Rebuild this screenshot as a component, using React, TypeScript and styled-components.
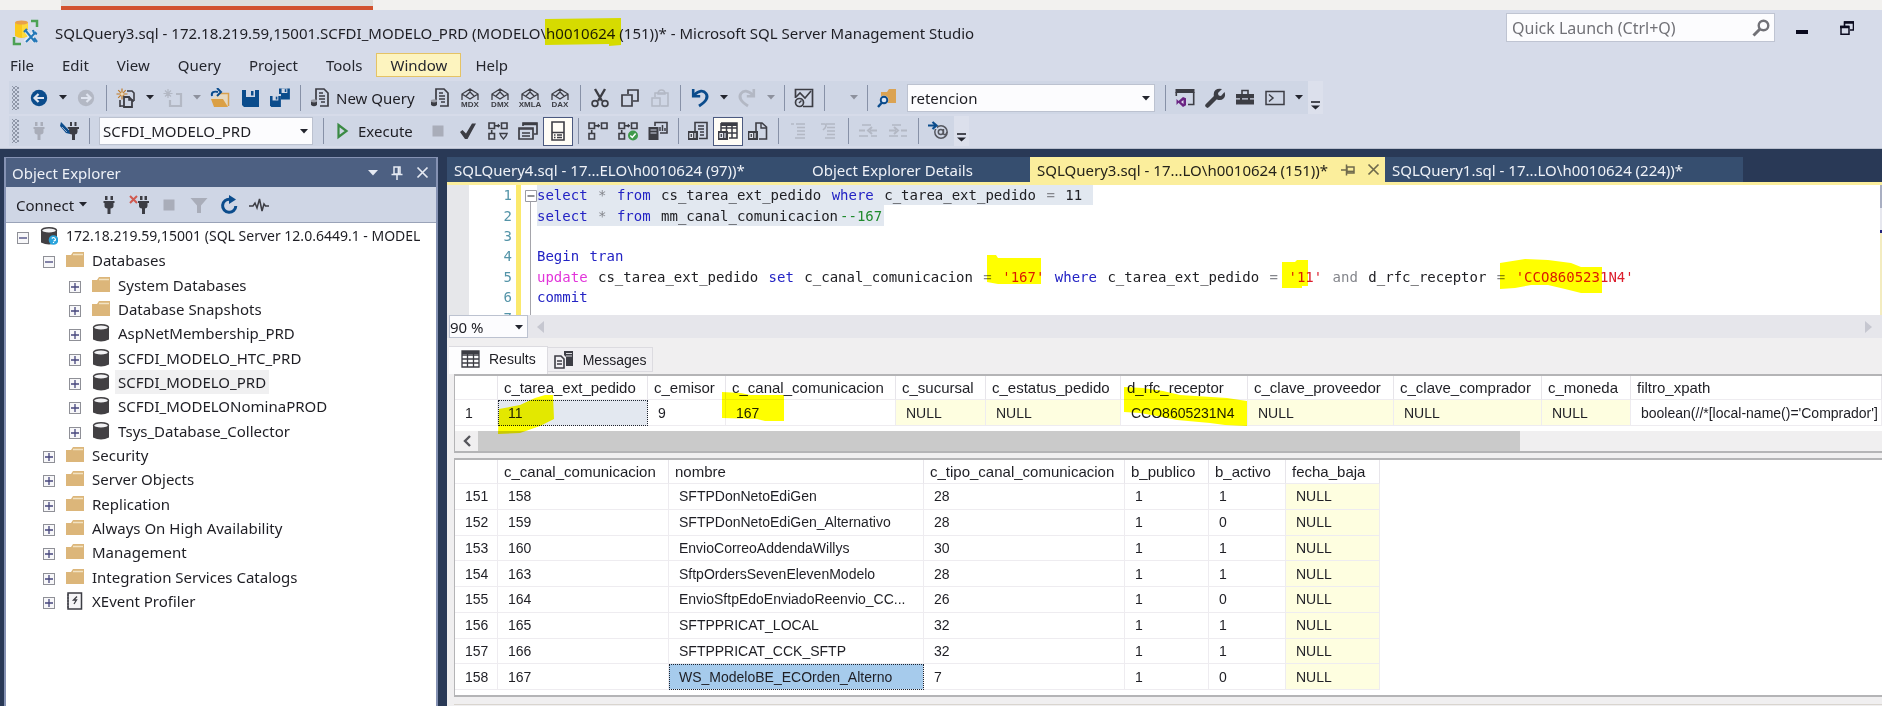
import React from 'react';
import styled, { createGlobalStyle, css } from 'styled-components';

const UI = '"Noto Sans", "Open Sans", sans-serif';
const GRID = '"Liberation Sans", Arial, sans-serif';
const MONO = '"DejaVu Sans Mono", "Liberation Mono", monospace';
const INK = '#3c3d44';
const BLUE = '#0b4c8c';
const DIM = '#b3b8c4';

const Global = createGlobalStyle`
  * { box-sizing: border-box; }
  body { margin: 0; background: #293956; font: 15px/20px ${UI}; color: #1e1e24; }
  button, input, select { font: inherit; color: inherit; margin: 0; padding: 0; border: 0; background: none; border-radius: 0; }
  svg { display: block; flex: none; }
`;

/* ---------- frame ---------- */

const App$ = styled.div`
  display: flex;
  flex-direction: column;
  min-height: 100vh;
  overflow: hidden;
`;

const BrowserStrip = styled.div`
  height: 10px;
  padding-left: 61px;
  background: #f2f1ef;
`;

const BrowserTab = styled.div`
  width: 312px;
  height: 10px;
  background: #dededb;
  border-bottom: 4px solid #d2532e;
`;

const Header = styled.header`
  background: #d6dbe9;
  border-bottom: 1px solid #b9bfce;
`;

const TitleBar = styled.div`
  display: flex;
  align-items: flex-start;
  height: 43px;
  padding: 3px 28px 0 12px;
`;

const Title = styled.h1`
  flex: 1;
  margin: 10px 0 0 16px;
  font-size: 15px;
  line-height: 20px;
  font-weight: 400;
  white-space: nowrap;
`;

const LogoSlot = styled.div`
  margin-top: 6px;
`;

const QuickLaunch = styled.label`
  display: flex;
  align-items: center;
  width: 269px;
  height: 29px;
  padding: 0 4px 0 5px;
  background: #fcfcfe;
  border: 1px solid #bfc4d2;
  input { flex: 1; min-width: 0; font-size: 16px; outline: 0; }
  input::placeholder { color: #717177; opacity: 1; }
`;

const WindowButton = styled.button`
  display: flex;
  justify-content: flex-end;
  height: 29px;
  align-items: center;
  width: 33px;
  & + & { width: 46px; }
`;

const MenuBar = styled.nav`
  display: flex;
  height: 24px;
  margin: 0 0 4px -4px;
`;

const MenuItem = styled.button<{ $active?: boolean }>`
  padding: 0 13px;
  border: 1px solid transparent;
  color: #24262e;
  ${p => p.$active && css`background: #fdf4bf; border-color: #e5c365;`}
`;

/* ---------- toolbars ---------- */

const BarRow = styled.div<{ $tall?: boolean }>`
  display: flex;
  height: ${p => (p.$tall ? 33 : 30)}px;
  margin: 0 0 2px 9px;
`;

const Bar = styled.div`
  display: flex;
  align-items: center;
  padding: 0 1px 0 3px;
  background: #cfd6e5;
`;

const Grip = styled.i`
  width: 7px;
  height: 24px;
  margin-right: 5px;
  background-image: radial-gradient(circle, #8f97a8 1px, transparent 1px), radial-gradient(circle, #8f97a8 1px, transparent 1px);
  background-size: 4px 4px;
  background-position: 0 0, 2px 2px;
`;

const ToolButton = styled.button<{ $on?: boolean }>`
  display: flex;
  align-items: center;
  justify-content: center;
  width: 30px;
  height: 29px;
  ${p => p.$on && css`background: #fffdf6; border: 1px solid #4c5a80;`}
`;

const DropButton = styled.button<{ $wide?: boolean }>`
  display: flex;
  align-items: center;
  justify-content: flex-end;
  width: ${p => (p.$wide ? 33 : 17)}px;
  height: 29px;
  padding-right: 4px;
`;

const TextButton = styled.button<{ $gap?: number }>`
  display: flex;
  align-items: center;
  height: 29px;
  padding: 0 10px 0 5px;
  gap: ${p => p.$gap ?? 6}px;
  white-space: nowrap;
`;

const Separator = styled.i`
  width: 1px;
  height: 26px;
  margin: 0 4px 0 5px;
  background: #8791a7;
`;

const Overflow = styled.button`
  display: flex;
  align-items: flex-end;
  justify-content: center;
  width: 15px;
  padding-bottom: 4px;
  background: #dce0ec;
`;

const ComboBox = styled.span<{ $w: number }>`
  position: relative;
  display: flex;
  width: ${p => p.$w}px;
  height: 28px;
  margin: 0 5px;
  background: #fcfcfe;
  border: 1px solid #bcc2d0;
  select { flex: 1; appearance: none; padding-left: 3px; outline: 0; }
  svg { position: absolute; right: 4px; top: 50%; margin-top: -2px; pointer-events: none; }
`;

/* ---------- object explorer ---------- */

const Workspace = styled.div`
  flex: 1;
  display: flex;
  gap: 9px;
  padding: 8px 0 0 4px;
`;

const Explorer = styled.aside`
  flex: 0 0 434px;
  display: flex;
  flex-direction: column;
  min-width: 0;
  border: 2px solid #8592b3;
  border-top-width: 1px;
  border-bottom: 0;
  background: #fff;
`;

const ExplorerHead = styled.div`
  display: flex;
  align-items: center;
  height: 29px;
  padding: 0 7px 0 6px;
  gap: 12px;
  background: #4d6082;
  color: #eef1f7;
  h2 { flex: 1; margin: 0; font-size: 15px; font-weight: 400; }
`;

const ExplorerTools = styled.div`
  display: flex;
  align-items: center;
  height: 36px;
  background: #cfd6e5;
  border-bottom: 1px solid #9aa3b8;
`;

const ConnectButton = styled(TextButton)`
  width: 88px;
  padding: 0 0 0 10px;
  gap: 5px;
`;

const Tree = styled.ul`
  display: grid;
  grid-auto-rows: 1fr;
  height: 389px;
  margin: 1px 0 0;
  padding: 0;
  list-style: none;
  overflow: hidden;
`;

const TreeRow = styled.li<{ $level: number }>`
  display: flex;
  align-items: center;
  padding-left: ${p => 11 + p.$level * 26}px;
  font-size: ${p => (p.$level === 0 ? 14 : 15)}px;
  white-space: nowrap;
`;

const Expander = styled.button`
  flex: none;
  width: 12px;
  height: 12px;
  margin: 4px 11px 0 0;
  border: 1px solid #8f9097;
  background: #f7f7f9;
  display: grid;
  place-items: center;
`;

const NodeIcon = styled.span`
  flex: none;
  width: 18px;
  margin-right: 5px;
`;

const NodeLabel = styled.span<{ $selected?: boolean }>`
  padding: 2px 3px;
  ${p => p.$selected && css`background: #f0f0f1;`}
`;

/* ---------- documents ---------- */

const Documents = styled.main`
  flex: 1;
  min-width: 0;
  display: flex;
  flex-direction: column;
`;

const TabStrip = styled.div`
  display: flex;
  height: 28px;
  border-bottom: 3px solid #fbee9c;
`;

const DocTab = styled.div<{ $w: number; $active?: boolean }>`
  display: flex;
  align-items: center;
  width: ${p => p.$w}px;
  padding-left: 7px;
  white-space: nowrap;
  color: ${p => (p.$active ? '#25231a' : '#eef1f7')};
  background: ${p => (p.$active ? '#fbee9c' : '#364e6f')};
  button:first-of-type { margin-left: 13px; }
  button + button { margin-left: 12px; }
`;

const Editor = styled.div`
  display: flex;
  height: 130px;
  overflow: hidden;
  background: #fff;
  font-family: ${MONO};
  font-size: 14px;
`;

const BreakMargin = styled.div`
  width: 22px;
  background: #e6e7ea;
`;

const LineColumn = styled.div`
  display: grid;
  grid-auto-rows: 1fr;
  height: 143px;
  align-items: center;
`;

const LineNumbers = styled(LineColumn)`
  width: 52px;
  padding-right: 4px;
  text-align: right;
  color: #5494a8;
  border-right: 5px solid #fbe96c;
`;

const Folding = styled.div`
  width: 16px;
  padding: 5px 0 0 4px;
`;

const CodeLines = styled(LineColumn)`
  flex: 1;
  white-space: pre;
`;

const CodeLine = styled.code<{ $selected?: 'line' | 'text' }>`
  justify-self: start;
  align-self: stretch;
  display: flex;
  align-items: center;
  font: inherit;
  ${p => p.$selected && css`background: #e2e8f0;`}
  ${p => p.$selected === 'line' && css`padding-right: 9px;`}
`;

const tokenColors = { k: '#2323c4', f: '#e234da', s: '#dc1c2c', o: '#84868c', c: '#1f8a2c', n: '#202024' };

const Token = styled.span<{ $kind: keyof typeof tokenColors }>`
  position: relative;
  margin-right: 2px;
  color: ${p => tokenColors[p.$kind]};
`;

const EditorScroll = styled.div`
  width: 2px;
  background: linear-gradient(#a9afc2 0 23px, #e6e7ee 23px 45px, #24247c 45px 48px, #f3ecc0 48px);
`;

const ZoomRow = styled.div`
  display: flex;
  align-items: center;
  height: 23px;
  padding: 0 9px 0 2px;
  background: #e6e6eb;
  justify-content: space-between;
  ${ComboBox} { width: 79px; height: 23px; margin: 0 9px 0 0; }
  select { padding-left: 0; line-height: 20px; }
`;

const ZoomLeft = styled.div`
  display: flex;
  align-items: center;
`;

const Results = styled.section`
  flex: 1;
  padding: 7px 0 0 2px;
  background: #f0eff0;
  font-family: ${GRID};
  font-size: 14px;
`;

const ResultTabs = styled.div`
  display: flex;
  align-items: flex-end;
  height: 29px;
`;

const ResultTab = styled.button<{ $active?: boolean }>`
  display: flex;
  align-items: center;
  height: ${p => (p.$active ? 28 : 25)}px;
  padding: ${p => (p.$active ? '0 11px 4px 12px' : '0 5px 0 6px')};
  margin-bottom: ${p => (p.$active ? 0 : 2)}px;
  gap: 9px;
  border: 1px solid #dcdbe0;
  border-left-width: 0;
  border-bottom-width: ${p => (p.$active ? 0 : 1)}px;
  background: ${p => (p.$active ? '#fdfdfe' : '#f0eff2')};
`;

const Pane = styled.div`
  margin-left: 5px;
  background: #fff;
  border: solid #b4b4b6;
  border-width: 2px 0 2px 1px;
  overflow: hidden;
  & + & { margin-top: 5px; }
`;

const Sheet = styled.table<{ $h: number; $fill?: boolean }>`
  table-layout: fixed;
  border-collapse: separate;
  border-spacing: 0;
  width: ${p => (p.$fill ? '100%' : '925px')};
  height: ${p => p.$h}px;
`;

const Col = styled.col<{ $w?: number }>`
  width: ${p => (p.$w ? p.$w + 'px' : 'auto')};
`;

const Head = styled.th`
  height: 24px;
  padding: 0 0 0 6px;
  font-size: 15px;
  line-height: 20px;
  font-weight: 400;
  text-align: left;
  white-space: nowrap;
  border-right: 1px solid #e7e5ea;
  border-bottom: 1px solid #eeecf0;
`;

const Cell = styled.td<{ $state?: 'null' | 'focus' | 'selected' }>`
  position: relative;
  padding: 0 0 0 10px;
  line-height: 20px;
  white-space: nowrap;
  border-right: 1px solid #eeecf0;
  border-bottom: 1px solid #eeecf0;
  ${p => p.$state === 'null' && css`background: #fefee0;`}
  ${p => p.$state === 'focus' && css`background: #e3e8f0;`}
  ${p => p.$state === 'selected' && css`background: #a6cbec;`}
  ${p => (p.$state === 'focus' || p.$state === 'selected') && css`outline: 1px dotted #1c2430; outline-offset: -1px;`}
`;

const HScroll = styled.div`
  display: flex;
  height: 20px;
  margin-top: 5px;
  background: #f0eff0;
`;

const HScrollButton = styled.button`
  display: grid;
  place-items: center;
  width: 23px;
`;

const HScrollThumb = styled.div`
  width: 73%;
  background: #cacaca;
`;

const PaneFoot = styled.div`
  height: 5px;
`;

const BottomLine = styled.div`
  margin: 7px 0 0 5px;
  height: 1px;
  background: #d9d5cf;
`;

/* ---------- marker pen ---------- */

const Anchor = styled.span`
  position: relative;
`;

const Ink = styled.svg<{ $x: number; $y: number }>`
  position: absolute;
  left: ${p => p.$x}px;
  top: ${p => p.$y}px;
  z-index: 2;
  mix-blend-mode: multiply;
  pointer-events: none;
`;

const Marker = ({ x, y, w, h, points }: { x: number; y: number; w: number; h: number; points: string }) => (
  <Ink $x={x} $y={y} width={w} height={h} aria-hidden>
    <polygon points={points} fill="#ffff00" />
  </Ink>
);

/* ---------- icons ---------- */

const Svg = ({ w = 20, h = 20, children }: { w?: number; h?: number; children: React.ReactNode }) => (
  <svg width={w} height={h} viewBox={`0 0 ${w} ${h}`} fill="none" aria-hidden>{children}</svg>
);

const Caret = ({ c = '#23252e' }: { c?: string }) => <Svg w={8} h={5}><path d="M0 0h8L4 4.600z" fill={c} /></Svg>;

const Logo = () => (
  <Svg w={27} h={27}>
    <path d="M3 4q6-3 13 0v13q-7 4-13 0z" fill="#fbc91a" />
    <path d="M10 3q4 0 6 1v13q-3 2-6 1z" fill="#fdda3c" />
    <ellipse cx="9.500" cy="3.500" rx="6.500" ry="2" fill="#e8a04a" />
    <path d="M19 2h6v6M2 18v7h7" stroke="#4da254" strokeWidth="2.500" />
    <path d="M14 12l9 11M24 12l-11 11" stroke="#e6ecf4" strokeWidth="4" />
    <path d="M14 12l9 11M24 13l-10 10" stroke="#2478b8" strokeWidth="2" />
    <path d="M21 11l1 3 3 1M12 13l3-3M22 19l3 4" stroke="#2478b8" strokeWidth="2.200" />
  </Svg>
);

const Nav = ({ c, flip }: { c: string; flip?: boolean }) => (
  <Svg>
    <circle cx="10" cy="10" r="8.200" fill={c} />
    <path d={flip ? 'M5 10h9M10.500 6l4 4-4 4' : 'M15 10H6M9.500 6l-4 4 4 4'} stroke="#dfe4ef" strokeWidth="2.200" />
  </Svg>
);

const NewProject = () => (
  <Svg>
    <path d="M6 .500v11M.500 6h11M2.200 2.200l7.600 7.600M9.800 2.200L2.200 9.800" stroke="#c07a26" strokeWidth="1.200" />
    <circle cx="6" cy="6" r="1.700" fill="#e9d9c0" />
    <path d="M11 3h5l2 2v8M4 12v7" stroke={INK} strokeWidth="1.600" />
    <path d="M8 9h5l3 3v7H8z" stroke={INK} strokeWidth="1.800" />
    <path d="M13 8v4h4M4 18h4M16 13h2" stroke={INK} strokeWidth="1.500" />
  </Svg>
);

const AddItem = () => (
  <Svg>
    <path d="M5 1v9M.500 5.500h9M2 2.500l6 6M8 2.500l-6 6" stroke={DIM} strokeWidth="1.200" />
    <path d="M13 6h5v12H7v-6" stroke={DIM} strokeWidth="2.200" />
  </Svg>
);

const OpenFile = () => (
  <Svg>
    <path d="M9 5h10v13H4l-3-8h3v-2" fill="#e6d9c0" />
    <path d="M10 5.500h8.500V18" stroke="#d9a14c" strokeWidth="1.500" />
    <path d="M1 11h12l5 8H4z" fill="#dba045" />
    <path d="M2 8C1 4 4 3 8 4" stroke={BLUE} strokeWidth="2" />
    <path d="M7 0l4 4-4 4" stroke={BLUE} strokeWidth="2" />
  </Svg>
);

const Disk = ({ s = 1, x = 0, y = 0 }: { s?: number; x?: number; y?: number }) => (
  <g transform={`translate(${x} ${y}) scale(${s})`}>
    <path d="M0 0h17v17H2l-2-2z" fill={BLUE} />
    <path d="M4 0h9v7H4z" fill="#cfd6e5" />
    <path d="M9 1h2.500v4.500H9z" fill={BLUE} />
  </g>
);

const Save = () => <Svg><Disk x={2} y={2} /></Svg>;
const SaveAll = () => <Svg><Disk s={0.64} x={9} y={0.5} /><path d="M-1 6h12v14H-1z" fill="#cfd6e5" /><Disk s={0.64} x={0} y={8} /><path d="M11 10h3" stroke={BLUE} strokeWidth="2" /></Svg>;

const QueryDoc = () => (
  <Svg>
    <path d="M6 12V1h8l4 4v13h-8" stroke={INK} strokeWidth="1.700" />
    <path d="M9 5h4M9 8h6M9 11h6M11 14h4" stroke={INK} strokeWidth="1.600" />
    <path d="M1 13v4q3 2.500 6 0v-4z" fill={INK} />
    <ellipse cx="4" cy="12.800" rx="3.200" ry="1.600" fill="#9a9ca6" />
  </Svg>
);

const IconCaption = styled.text`
  font: 700 8px ${GRID};
  fill: ${INK};
`;

const Cube = ({ label }: { label: string }) => (
  <Svg w={22} h={22}>
    <path d="M3 13V7l8-5 8 5v6M3 7l8 5 8-5M11 2v3M7 9l4-4 4 4" stroke={INK} strokeWidth="1.300" />
    <path d="M1 13.500h20v8H1z" fill="#cfd6e5" />
    <IconCaption x="11" y="20" textAnchor="middle">{label}</IconCaption>
  </Svg>
);

const Cut = () => (
  <Svg>
    <path d="M5 1l7 12M15 1L8 13" stroke={INK} strokeWidth="2.400" />
    <circle cx="5" cy="15.500" r="2.900" stroke={INK} strokeWidth="1.700" />
    <circle cx="15" cy="15.500" r="2.900" stroke={INK} strokeWidth="1.700" />
  </Svg>
);

const Copy = () => <Svg><path d="M8 6V2h10v11h-5M2 7h10v11H2z" stroke={INK} strokeWidth="1.700" /></Svg>;

const Paste = () => (
  <Svg>
    <path d="M5 9V5h13v13h-7" stroke={DIM} strokeWidth="1.500" />
    <path d="M8 6q0-4 3.500-4T15 6z" stroke={DIM} strokeWidth="1.500" />
    <path d="M2 10h8v8H2z" stroke={DIM} strokeWidth="1.500" />
  </Svg>
);

const Undo = ({ c, flip }: { c: string; flip?: boolean }) => (
  <Svg>
    <g transform={flip ? 'matrix(-1 0 0 1 20 0)' : undefined}>
      <path d="M4 7Q12 0 16 5.500T9 18" stroke={c} strokeWidth="2.900" />
      <path d="M3.200 1v7.200h7" stroke={c} strokeWidth="2.600" />
    </g>
  </Svg>
);

const Activity = () => (
  <Svg>
    <path d="M1.500 10V1.500h17v17H9" stroke={INK} strokeWidth="1.700" />
    <path d="M2 9l4-4 5 5 6-7" stroke={INK} strokeWidth="1.600" />
    <circle cx="5.500" cy="14.500" r="4" stroke={INK} strokeWidth="1.700" />
    <path d="M5 15l2.500-2.500" stroke={INK} strokeWidth="1.400" />
  </Svg>
);

const FindFolder = () => (
  <Svg>
    <path d="M4 4h6l2-3h7v14H9l-5-3z" fill="#dba353" />
    <circle cx="7" cy="12" r="4.500" fill="#cfd6e5" />
    <circle cx="7" cy="12" r="3.300" stroke={BLUE} strokeWidth="1.900" fill="#dbe3f2" />
    <path d="M5 14.500L1 19" stroke={BLUE} strokeWidth="2.400" />
  </Svg>
);

const StudioWindow = () => (
  <Svg>
    <path d="M.500 1h19v4H.500z" fill={INK} />
    <path d="M1.300 4v4M18.700 4v12.500H13" stroke={INK} strokeWidth="1.600" />
    <path d="M8 9l3 1.200v7L8 19l-4.500-4.300L1.500 17V11l2 2z" fill="#6a2483" />
    <path d="M8.500 12v4L6 14z" fill="#e2dff0" />
  </Svg>
);

const Wrench = () => (
  <Svg>
    <path d="M2.500 17.500l9-9" stroke={INK} strokeWidth="4.500" strokeLinecap="round" />
    <path d="M17 1l-4 4 .500 2.500 2.500.500 3.500-4q1.500 4-1 6.500t-6.500 1L9 8.500Q8 4 10.500 2T17 1z" fill={INK} />
  </Svg>
);

const Toolbox = () => (
  <Svg>
    <path d="M7 6V2.500h6V6" stroke={INK} strokeWidth="1.600" />
    <path d="M1 6h18v10.500H1z" fill={INK} />
    <path d="M1 10.800h4M7 10.800h6M15 10.800h4" stroke="#cfd6e5" strokeWidth="1.200" />
  </Svg>
);

const Terminal = () => <Svg><path d="M1 3.500h18v13H1z" stroke={INK} strokeWidth="1.500" /><path d="M4 6.500l4 3.500-4 3.500" stroke={INK} strokeWidth="1.500" /></Svg>;
const MoreMark = () => <Svg w={9} h={9}><path d="M0 1h9" stroke="#23252e" strokeWidth="1.600" /><path d="M0 4.500h9l-4.500 4z" fill="#23252e" /></Svg>;

const Plug = ({ c = INK }: { c?: string }) => (
  <Svg>
    <path d="M6 1h2.500v4H6zM11.500 1H14v4h-2.500zM4.500 6h11v2h-1V11q0 2-3 2.500V19h-3v-5.500q-3-.500-3-2.500V8h-1z" fill={c} />
  </Svg>
);

const ChangePlug = () => (
  <Svg>
    <path d="M11 1h2v4h-2zM15.500 1h2v4h-2zM8.500 6H20v2h-1.500V11q0 2-2.500 2.500V19h-3v-5.500q-3-.500-3-2.500V8H8.500z" fill={INK} />
    <path d="M2 1l8 8 1 4-4-1-6-7z" fill={BLUE} />
    <path d="M3 6l5 5M6 4l4 5" stroke="#cfd6e5" strokeWidth="0.700" />
  </Svg>
);

const Unplug = () => (
  <Svg>
    <path d="M11 1h2.500v4H11zM15.500 1H18v4h-2.500zM9 6h11v2h-1.500V11q0 2-2.500 2.500V19h-3v-5.500q-3-.500-3-2.500V8H9z" fill={INK} />
    <path d="M1 1l7 7M8 1L1 8" stroke="#d05a50" strokeWidth="2" />
  </Svg>
);

const Play = () => <Svg><path d="M5.500 4l8 6-8 6z" stroke="#3a8a43" strokeWidth="2.200" /></Svg>;
const Stop = ({ c = '#a9adb9' }: { c?: string }) => <Svg><path d="M4.500 4.500h11v11h-11z" fill={c} /></Svg>;
const Check = () => <Svg><path d="M2 11l2.500-2L8 12.500 14 2.500h4L9.500 18H7z" fill={INK} /></Svg>;

const Plan = ({ kind }: { kind: 'estimate' | 'live' | 'actual' }) => (
  <Svg>
    <path d="M1 2h5.500v5.500H1zM13.500 2H19v5.500h-5.500zM1 12.500h5.500V18H1z" stroke={INK} strokeWidth="1.600" />
    <path d="M7 4.800h5M3.700 12V9" stroke={INK} strokeWidth="1.600" />
    <path d="M8 4.800l3-2v4z" fill={INK} />
    {kind === 'estimate' && <path d="M12 12.500h7l-1 2.500-2.500 3-2.500-3z" stroke={INK} strokeWidth="1.400" />}
    {kind === 'live' && <><circle cx="15" cy="14.500" r="5" fill="#3f9a4a" /><path d="M12.300 14.500l2 2 3.300-4" stroke="#fff" strokeWidth="1.500" /></>}
  </Svg>
);

const Windows = () => (
  <Svg>
    <path d="M5 5V2h14v11h-3" stroke={INK} strokeWidth="1.700" /><path d="M5 3h14" stroke={INK} strokeWidth="2.500" />
    <path d="M1 7h14v11H1z" stroke={INK} strokeWidth="1.700" /><path d="M1 8h14M4 12h8M4 15h8" stroke={INK} strokeWidth="1.500" />
  </Svg>
);

const SplitPane = () => (
  <Svg>
    <path d="M4 1h12v18H4zM4 11.500h12" stroke={INK} strokeWidth="1.600" />
    <path d="M6 14h1.500M9 14h5M6 16.500h1.500M9 16.500h5" stroke={INK} strokeWidth="1.300" />
  </Svg>
);

const ServerStats = () => (
  <Svg>
    <path d="M.500 6h10v13H.500z" fill={INK} /><path d="M2.500 9h6M2.500 12h6" stroke="#cfd6e5" />
    <path d="M7 5V1.500h12V12h-7" stroke={INK} strokeWidth="1.600" /><path d="M12 10V6M14.500 10V4M17 10V7" stroke={INK} strokeWidth="1.500" />
  </Svg>
);

const ResultsTo = ({ kind }: { kind: 'text' | 'grid' | 'file' }) => (
  <Svg>
    {kind === 'text' && <><path d="M7 10V1.500h12v16h-8" stroke={INK} strokeWidth="1.600" /><path d="M10 5h6M10 8h6M12 11h4M12 14h4" stroke={INK} strokeWidth="1.400" /></>}
    {kind === 'grid' && <><path d="M3 2h16v15h-8M3 10V2M3 7h16M3 12h16M8.500 3v9M14 3v14" stroke={INK} strokeWidth="1.500" /><path d="M3 2h16v3H3z" fill={INK} /></>}
    {kind === 'file' && <><path d="M8 10V2h6l4.500 4v12H11" stroke={INK} strokeWidth="1.600" /><path d="M13 2v5h5" stroke={INK} strokeWidth="1.400" /></>}
    <path d="M0 10h10v9H0z" fill={INK} />
    <path d="M2 12.500h2.500v4H2zM7 12v5" stroke="#e4e8f1" strokeWidth="1.200" />
  </Svg>
);

const Lines = ({ arrow }: { arrow?: boolean }) => (
  <Svg>
    {arrow ? <path d="M3 3h4q2 1 0 4l-2 2" stroke={DIM} strokeWidth="1.600" /> : <path d="M3 3h3" stroke={DIM} strokeWidth="1.500" />}
    <path d="M8 3h9M9 6.500h8M9 10h8M9 13.500h8M7 17h10" stroke={DIM} strokeWidth="1.500" />
  </Svg>
);

const Indent = ({ flip }: { flip?: boolean }) => (
  <Svg>
    <path d="M4 4h9M1 15h9M13 15h6" stroke={DIM} strokeWidth="1.600" />
    <path d={flip ? 'M1 9.500h7M6 6l4 3.500L6 13M13 9.500h6' : 'M19 9.500h-7M14 6l-4 3.500 4 3.500M1 9.500h6'} stroke={DIM} strokeWidth="2" />
  </Svg>
);

const SpecifyValues = () => (
  <Svg>
    <circle cx="13" cy="11" r="6.200" stroke="#55575f" strokeWidth="1.500" />
    <circle cx="12.800" cy="11" r="2.500" stroke="#55575f" strokeWidth="1.500" />
    <path d="M15.500 8v5q2 2 3.500-2" stroke="#55575f" strokeWidth="1.400" />
    <path d="M0 0h9v8H0z" fill="#cfd6e5" />
    <path d="M0 4.500h7M4.500 1l4 3.500-4 3.500" stroke={BLUE} strokeWidth="2.200" />
  </Svg>
);

const Filter = () => <Svg><path d="M1.500 3h17L12 10.500V18H8v-7.500z" fill="#a9adb9" /></Svg>;

const Refresh = () => (
  <Svg>
    <path d="M11 4.200A6.600 6.600 0 1 0 16.800 11" stroke={BLUE} strokeWidth="3" />
    <path d="M10 0l7 4.500L10 9z" fill={BLUE} />
  </Svg>
);

const Pulse = () => <Svg><path d="M0 11h4l2-3 2 5 2.500-9 2.500 12 2-7 1.500 2H20" stroke={INK} strokeWidth="1.500" /></Svg>;

const Pin = ({ c, side }: { c: string; side?: boolean }) => (
  <Svg w={14} h={14}>
    <g transform={side ? 'rotate(90 7 7)' : undefined}>
      <path d="M4 1h6v7H4zM1.500 8.500h11M7 9v5" stroke={c} strokeWidth="1.500" /><path d="M8.500 1v7" stroke={c} strokeWidth="1.800" />
    </g>
  </Svg>
);

const Cross = ({ c }: { c: string }) => <Svg w={13} h={13}><path d="M1.500 1.500l10 10M11.500 1.500l-10 10" stroke={c} strokeWidth="1.700" /></Svg>;

const Folder = () => (
  <Svg w={18} h={18}>
    <path d="M0 4h5l2-3h11v15H0z" fill="#dcb67a" /><path d="M7 3.500h10" stroke="#f3e3c3" strokeWidth="1.500" />
  </Svg>
);

const Database = ({ server }: { server?: boolean }) => (
  <Svg w={18} h={18}>
    <path d="M1 3v12.500q8 4 16 0V3z" fill="#424043" />
    <ellipse cx="9" cy="3.500" rx="7.500" ry="2.800" fill="#f1f1f3" stroke="#424043" strokeWidth="1.400" />
    {server && <><circle cx="13.500" cy="13" r="4.800" fill="#29a3dc" /><path d="M11.800 11.500q1.700-2 3.200 0t-1.500 2.500M13.500 15v1" stroke="#fff" strokeWidth="1.200" /></>}
  </Svg>
);

const XEvent = () => (
  <Svg w={18} h={18}>
    <path d="M2 1h13.500v16H2z" stroke={INK} strokeWidth="1.500" fill="#f5f5f7" />
    <path d="M1 3h2M1 6h2M1 9h2M1 12h2M1 15h2" stroke={INK} strokeWidth="1.200" />
    <path d="M11 4.500L7.500 8h3L8 12" stroke={INK} strokeWidth="1.300" />
  </Svg>
);

const GridIcon = () => (
  <Svg w={19} h={18}>
    <path d="M1 1h17v16H1zM1 5h17M1 9h17M1 13h17M6.500 1v16M12.500 1v16" stroke={INK} strokeWidth="1.300" />
    <path d="M1 1h17v3H1z" fill={INK} />
  </Svg>
);

const MessagesIcon = () => (
  <Svg>
    <path d="M1 6h6l3 3v9H1z" stroke={INK} strokeWidth="1.600" /><path d="M3 11h5M3 14h5" stroke={INK} strokeWidth="1.300" />
    <path d="M10 1h9v15h-7V7l-2-2z" fill={INK} /><path d="M12 3.500h6M12 6h6" stroke="#d8d8dc" />
  </Svg>
);

/* ---------- data ---------- */

const menus = ['File', 'Edit', 'View', 'Query', 'Project', 'Tools', 'Window', 'Help'];

type Node = { label: string; level: number; icon: React.ReactNode; open?: boolean; selected?: boolean };

const tree: Node[] = [
  { label: '172.18.219.59,15001 (SQL Server 12.0.6449.1 - MODEL', level: 0, icon: <Database server />, open: true },
  { label: 'Databases', level: 1, icon: <Folder />, open: true },
  { label: 'System Databases', level: 2, icon: <Folder /> },
  { label: 'Database Snapshots', level: 2, icon: <Folder /> },
  { label: 'AspNetMembership_PRD', level: 2, icon: <Database /> },
  { label: 'SCFDI_MODELO_HTC_PRD', level: 2, icon: <Database /> },
  { label: 'SCFDI_MODELO_PRD', level: 2, icon: <Database />, selected: true },
  { label: 'SCFDI_MODELONominaPROD', level: 2, icon: <Database /> },
  { label: 'Tsys_Database_Collector', level: 2, icon: <Database /> },
  { label: 'Security', level: 1, icon: <Folder /> },
  { label: 'Server Objects', level: 1, icon: <Folder /> },
  { label: 'Replication', level: 1, icon: <Folder /> },
  { label: 'Always On High Availability', level: 1, icon: <Folder /> },
  { label: 'Management', level: 1, icon: <Folder /> },
  { label: 'Integration Services Catalogs', level: 1, icon: <Folder /> },
  { label: 'XEvent Profiler', level: 1, icon: <XEvent /> },
];

type Tok = [keyof typeof tokenColors, string, React.ReactNode?];

const code: { selected?: 'line' | 'text'; tokens: Tok[] }[] = [
  { selected: 'line', tokens: [['k', 'select'], ['o', '*'], ['k', 'from'], ['n', 'cs_tarea_ext_pedido'], ['k', 'where'], ['n', 'c_tarea_ext_pedido'], ['o', '='], ['n', '11']] },
  { selected: 'text', tokens: [['k', 'select'], ['o', '*'], ['k', 'from'], ['n', 'mm_canal_comunicacion'], ['c', '--167']] },
  { tokens: [] },
  { tokens: [['k', 'Begin'], ['k', 'tran']] },
  {
    tokens: [
      ['f', 'update'], ['n', 'cs_tarea_ext_pedido'], ['k', 'set'], ['n', 'c_canal_comunicacion'], ['o', '='],
      ['s', "'167'", <Marker x={-15} y={-12} w={54} h={29} points="0,0 9,0 11,3 54,3 54,29 11,29 0,27" />],
      ['k', 'where'], ['n', 'c_tarea_ext_pedido'], ['o', '='],
      ['s', "'11'", <Marker x={-6} y={-7} w={26} h={28} points="0,2 13,2 15,0 26,0 26,26 20,26 20,28 0,28" />],
      ['o', 'and'], ['n', 'd_rfc_receptor'], ['o', '='],
      ['s', "'CCO8605231N4'", <Marker x={-16} y={-8} w={102} h={34} points="0,4 25,0 48,1 71,4 81,8 102,8 102,34 81,34 65,30 48,26 31,26 15,29 0,30" />],
    ],
  },
  { tokens: [['k', 'commit']] },
  { tokens: [] },
];

const firstCols = [43, 150, 78, 170, 90, 135, 127, 146, 148, 89];
const firstHeads = ['c_tarea_ext_pedido', 'c_emisor', 'c_canal_comunicacion', 'c_sucursal', 'c_estatus_pedido', 'd_rfc_receptor', 'c_clave_proveedor', 'c_clave_comprador', 'c_moneda', 'filtro_xpath'];

const secondCols = [43, 171, 255, 201, 84, 77, 94];
const secondHeads = ['c_canal_comunicacion', 'nombre', 'c_tipo_canal_comunicacion', 'b_publico', 'b_activo', 'fecha_baja'];
const channels: string[][] = [
  ['151', '158', 'SFTPDonNetoEdiGen', '28', '1', '1'],
  ['152', '159', 'SFTPDonNetoEdiGen_Alternativo', '28', '1', '0'],
  ['153', '160', 'EnvioCorreoAddendaWillys', '30', '1', '1'],
  ['154', '163', 'SftpOrdersSevenElevenModelo', '28', '1', '1'],
  ['155', '164', 'EnvioSftpEdoEnviadoReenvio_CC...', '26', '1', '0'],
  ['156', '165', 'SFTPPRICAT_LOCAL', '32', '1', '1'],
  ['157', '166', 'SFTPPRICAT_CCK_SFTP', '32', '1', '1'],
  ['158', '167', 'WS_ModeloBE_ECOrden_Alterno', '7', '1', '0'],
];

/* ---------- pieces ---------- */

const Tool = ({ name, on, children }: { name: string; on?: boolean; children: React.ReactNode }) => (
  <ToolButton type="button" aria-label={name} aria-pressed={on} $on={on}>{children}</ToolButton>
);

const Drop = ({ name, dim, wide }: { name: string; dim?: boolean; wide?: boolean }) => (
  <DropButton type="button" aria-label={name} $wide={wide}><Caret c={dim ? '#8d919d' : undefined} /></DropButton>
);

const Combo = ({ name, value, w }: { name: string; value: string; w: number }) => (
  <ComboBox $w={w}>
    <select aria-label={name} defaultValue={value}><option>{value}</option></select>
    <Caret />
  </ComboBox>
);

const StandardToolbar = () => (
  <BarRow $tall>
    <Bar role="toolbar" aria-label="Standard">
      <Grip />
      <Tool name="Navigate backward"><Nav c={BLUE} /></Tool><Drop name="Back history" />
      <Tool name="Navigate forward"><Nav c={DIM} flip /></Tool>
      <Separator />
      <Tool name="New project"><NewProject /></Tool><Drop name="New project options" />
      <Tool name="Add item"><AddItem /></Tool><Drop name="Add item options" dim />
      <Tool name="Open file"><OpenFile /></Tool>
      <Tool name="Save"><Save /></Tool>
      <Tool name="Save all"><SaveAll /></Tool>
      <Separator />
      <TextButton type="button"><QueryDoc />New Query</TextButton>
      <Tool name="Database engine query"><QueryDoc /></Tool>
      {['MDX', 'DMX', 'XMLA', 'DAX'].map(l => <Tool key={l} name={`${l} query`}><Cube label={l} /></Tool>)}
      <Separator />
      <Tool name="Cut"><Cut /></Tool>
      <Tool name="Copy"><Copy /></Tool>
      <Tool name="Paste"><Paste /></Tool>
      <Separator />
      <Tool name="Undo"><Undo c={BLUE} /></Tool><Drop name="Undo list" />
      <Tool name="Redo"><Undo c={DIM} flip /></Tool><Drop name="Redo list" dim />
      <Separator />
      <Tool name="Activity monitor"><Activity /></Tool>
      <Separator />
      <Drop name="Configurations" dim wide />
      <Separator />
      <Tool name="Find in files"><FindFolder /></Tool>
      <Combo name="Find" value="retencion" w={248} />
      <Separator />
      <Tool name="Start window"><StudioWindow /></Tool>
      <Tool name="Properties"><Wrench /></Tool>
      <Tool name="Toolbox"><Toolbox /></Tool>
      <Tool name="Command window"><Terminal /></Tool><Drop name="Other windows" />
    </Bar>
    <Overflow type="button" aria-label="Toolbar options"><MoreMark /></Overflow>
  </BarRow>
);

const EditorToolbar = () => (
  <BarRow>
    <Bar role="toolbar" aria-label="SQL editor">
      <Grip />
      <Tool name="Connect"><Plug c="#a9adb9" /></Tool>
      <Tool name="Change connection"><ChangePlug /></Tool>
      <Separator />
      <Combo name="Available databases" value="SCFDI_MODELO_PRD" w={214} />
      <Separator />
      <TextButton type="button" $gap={5}><Play />Execute</TextButton>
      <Tool name="Cancel"><Stop /></Tool>
      <Tool name="Parse"><Check /></Tool>
      <Tool name="Display estimated plan"><Plan kind="estimate" /></Tool>
      <Tool name="Query options"><Windows /></Tool>
      <Tool name="IntelliSense" on><SplitPane /></Tool>
      <Separator />
      <Tool name="Include actual plan"><Plan kind="actual" /></Tool>
      <Tool name="Include live statistics"><Plan kind="live" /></Tool>
      <Tool name="Include client statistics"><ServerStats /></Tool>
      <Separator />
      <Tool name="Results to text"><ResultsTo kind="text" /></Tool>
      <Tool name="Results to grid" on><ResultsTo kind="grid" /></Tool>
      <Tool name="Results to file"><ResultsTo kind="file" /></Tool>
      <Separator />
      <Tool name="Comment lines"><Lines /></Tool>
      <Tool name="Uncomment lines"><Lines arrow /></Tool>
      <Separator />
      <Tool name="Decrease indent"><Indent /></Tool>
      <Tool name="Increase indent"><Indent flip /></Tool>
      <Separator />
      <Tool name="Specify template values"><SpecifyValues /></Tool>
    </Bar>
    <Overflow type="button" aria-label="Toolbar options"><MoreMark /></Overflow>
  </BarRow>
);

const ObjectExplorer = () => (
  <Explorer>
    <ExplorerHead>
      <h2>Object Explorer</h2>
      <button type="button" aria-label="Window position"><Svg w={10} h={6}><path d="M0 0h10L5 5.500z" fill="#e6eaf3" /></Svg></button>
      <button type="button" aria-label="Auto hide"><Pin c="#e6eaf3" /></button>
      <button type="button" aria-label="Close"><Cross c="#e6eaf3" /></button>
    </ExplorerHead>
    <ExplorerTools>
      <ConnectButton type="button">Connect<Caret /></ConnectButton>
      <Tool name="Connect object explorer"><Plug /></Tool>
      <Tool name="Disconnect"><Unplug /></Tool>
      <Tool name="Stop"><Stop /></Tool>
      <Tool name="Filter"><Filter /></Tool>
      <Tool name="Refresh"><Refresh /></Tool>
      <Tool name="Monitor"><Pulse /></Tool>
    </ExplorerTools>
    <Tree role="tree">
      {tree.map(n => (
        <TreeRow key={n.label} role="treeitem" aria-expanded={!!n.open} aria-selected={!!n.selected} $level={n.level}>
          <Expander type="button" aria-label={n.open ? 'Collapse' : 'Expand'}>
            <Svg w={8} h={8}><path d={n.open ? 'M0 4h8' : 'M0 4h8M4 0v8'} stroke="#45457c" strokeWidth="1.300" /></Svg>
          </Expander>
          <NodeIcon>{n.icon}</NodeIcon>
          <NodeLabel $selected={n.selected}>{n.label}</NodeLabel>
        </TreeRow>
      ))}
    </Tree>
  </Explorer>
);

const QueryEditor = () => (
  <>
    <Editor>
      <BreakMargin />
      <LineNumbers>{code.map((_, i) => <span key={i}>{i + 1}</span>)}</LineNumbers>
      <Folding>
        <Svg w={12} h={140}>
          <path d="M.500 .500h11v11H.500z" stroke="#9a9ba2" fill="#fff" /><path d="M2.500 6h7" stroke="#55565e" strokeWidth="1.300" />
          <path d="M5.500 12v128" stroke="#a5a5ab" />
        </Svg>
      </Folding>
      <CodeLines>
        {code.map((line, i) => (
          <CodeLine key={i} $selected={line.selected}>
            {line.tokens.map(([kind, text, mark], j) => {
              const next = line.tokens[j + 1];
              const last = !next || next[0] === 'c';
              return <Token key={j} $kind={kind}>{text}{last ? '' : ' '}{mark}</Token>;
            })}
          </CodeLine>
        ))}
      </CodeLines>
      <EditorScroll />
    </Editor>
    <ZoomRow>
      <ZoomLeft>
        <Combo name="Zoom" value="90 %" w={79} />
        <Svg w={8} h={12}><path d="M7 0v12L0 6z" fill="#c6c7d0" /></Svg>
      </ZoomLeft>
      <Svg w={8} h={12}><path d="M0 0v12l7-6z" fill="#c6c7d0" /></Svg>
    </ZoomRow>
  </>
);

const FirstResult = () => (
  <Pane>
    <Sheet $h={50} $fill>
      <colgroup>{firstCols.map((w, i) => <Col key={i} $w={w} />)}<Col /></colgroup>
      <thead><tr><Head aria-label="Row" />{firstHeads.map(h => <Head key={h}>{h}</Head>)}</tr></thead>
      <tbody>
        <tr>
          <Cell>1</Cell>
          <Cell $state="focus">11<Marker x={0} y={-5} w={56} h={41} points="1,14 22,10 37,3 47,0 55,0 56,24 42,31 22,38 0,39" /></Cell>
          <Cell>9</Cell>
          <Cell>167<Marker x={-4} y={-8} w={62} h={29} points="0,0 19,1 28,3 62,3 62,29 43,29 35,27 0,26" /></Cell>
          <Cell $state="null">NULL</Cell>
          <Cell $state="null">NULL</Cell>
          <Cell>CCO8605231N4<Marker x={3} y={-13} w={123} h={39} points="0,0 19,1 39,4 56,8 103,11 123,14 123,39 101,38 86,36 53,33 33,29 16,26 0,25" /></Cell>
          <Cell $state="null">NULL</Cell>
          <Cell $state="null">NULL</Cell>
          <Cell $state="null">NULL</Cell>
          <Cell>boolean(//*[local-name()='Comprador']</Cell>
        </tr>
      </tbody>
    </Sheet>
    <HScroll>
      <HScrollButton type="button" aria-label="Scroll left"><Svg w={8} h={12}><path d="M7 1L2 6l5 5" stroke="#56565c" strokeWidth="2.400" /></Svg></HScrollButton>
      <HScrollThumb />
    </HScroll>
  </Pane>
);

const SecondResult = () => (
  <Pane>
    <Sheet $h={230}>
      <colgroup>{secondCols.map((w, i) => <Col key={i} $w={w} />)}</colgroup>
      <thead><tr><Head aria-label="Row" />{secondHeads.map(h => <Head key={h}>{h}</Head>)}</tr></thead>
      <tbody>
        {channels.map(row => (
          <tr key={row[0]}>
            {row.map((v, i) => <Cell key={i} $state={row[0] === '158' && i === 2 ? 'selected' : undefined}>{v}</Cell>)}
            <Cell $state="null">NULL</Cell>
          </tr>
        ))}
      </tbody>
    </Sheet>
    <PaneFoot />
  </Pane>
);

export default function App() {
  return (
    <App$>
      <Global />
      <BrowserStrip><BrowserTab /></BrowserStrip>
      <Header>
        <TitleBar>
          <LogoSlot><Logo /></LogoSlot>
          <Title>
            SQLQuery3.sql - 172.18.219.59,15001.SCFDI_MODELO_PRD (MODELO\
            <Anchor>h0010624<Marker x={-1} y={-5} w={76} h={28} points="0,1 76,0 76,27 64,28 64,26 0,27" /></Anchor>
            {' (151))* - Microsoft SQL Server Management Studio'}
          </Title>
          <QuickLaunch>
            <input type="text" placeholder="Quick Launch (Ctrl+Q)" aria-label="Quick Launch" />
            <Svg w={18} h={18}><circle cx="11.500" cy="6.500" r="4.800" stroke="#717177" strokeWidth="2.400" /><path d="M8 10l-6.500 6.500" stroke="#717177" strokeWidth="3" /></Svg>
          </QuickLaunch>
          <WindowButton type="button" aria-label="Minimize"><Svg w={12} h={14}><path d="M0 9h12v4H0z" fill="#0a0a1e" /></Svg></WindowButton>
          <WindowButton type="button" aria-label="Restore"><Svg w={14} h={14}><path d="M4.500 5V1h9v8H10" stroke="#0a0a1e" strokeWidth="1.600" /><path d="M4 1.500h10M0 6h9" stroke="#0a0a1e" strokeWidth="2.600" /><path d="M1 5.500h8v7.700H1z" stroke="#0a0a1e" strokeWidth="1.500" /></Svg></WindowButton>
        </TitleBar>
        <MenuBar>
          {menus.map(m => <MenuItem key={m} type="button" $active={m === 'Window'}>{m}</MenuItem>)}
        </MenuBar>
        <StandardToolbar />
        <EditorToolbar />
      </Header>
      <Workspace>
        <ObjectExplorer />
        <Documents>
          <TabStrip>
            <DocTab $w={358}>SQLQuery4.sql - 17...ELO\h0010624 (97))*</DocTab>
            <DocTab $w={225}>Object Explorer Details</DocTab>
            <DocTab $w={355} $active>
              SQLQuery3.sql - 17...LO\h0010624 (151))*
              <button type="button" aria-label="Pin tab"><Pin c="#6f6a4c" side /></button>
              <button type="button" aria-label="Close tab"><Cross c="#6f6a4c" /></button>
            </DocTab>
            <DocTab $w={358}>SQLQuery1.sql - 17...LO\h0010624 (224))*</DocTab>
          </TabStrip>
          <QueryEditor />
          <Results>
            <ResultTabs>
              <ResultTab type="button" $active><GridIcon />Results</ResultTab>
              <ResultTab type="button"><MessagesIcon />Messages</ResultTab>
            </ResultTabs>
            <FirstResult />
            <SecondResult />
            <BottomLine />
          </Results>
        </Documents>
      </Workspace>
    </App$>
  );
}
